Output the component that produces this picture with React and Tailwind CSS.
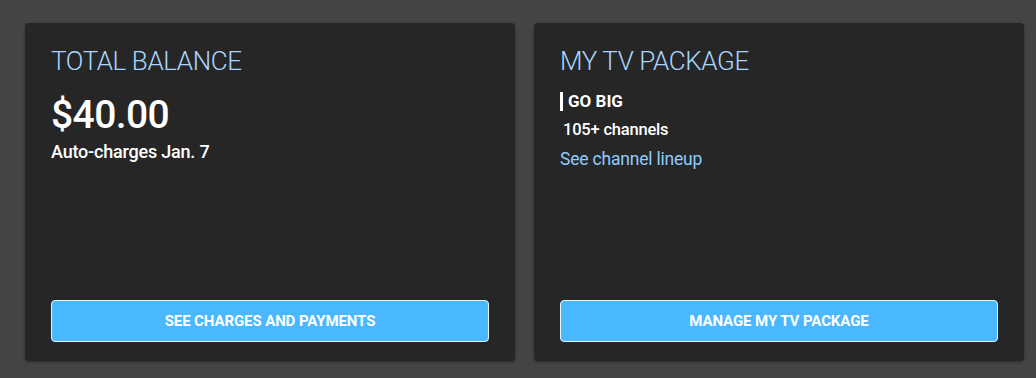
import React from "react";

const font = { fontFamily: "Roboto, 'Liberation Sans', sans-serif" };

function Card({ title, children, action }) {
  return (
    <div className="flex flex-col w-[490px] h-[338px] bg-[#262626] rounded-[4px] shadow-[0_1px_3px_rgba(0,0,0,0.35)] px-[26px] pt-[21px] pb-[19px]">
      <h2 className="text-[26px] leading-[34px] font-light text-[#a8d5ff] tracking-[-0.4px]">{title}</h2>
      <div className="flex-1">{children}</div>
      <button className="h-[42px] w-full bg-[#4ab8ff] border border-[#e6f4ff] rounded-[4px] text-white text-[15px] font-bold uppercase tracking-[-0.1px]">
        {action}
      </button>
    </div>
  );
}

export default function App() {
  return (
    <div className="min-h-screen bg-[#444444] pt-[23px] pl-[25px]" style={font}>
      <div className="flex gap-[19px]">
        <Card title="TOTAL BALANCE" action="See charges and payments">
          <div className="mt-[14px] text-[39px] leading-[46px] font-medium text-white tracking-[-0.6px]">$40.00</div>
          <div className="mt-[3px] text-[18px] leading-[22px] font-medium text-white tracking-[-0.2px]">Auto-charges Jan. 7</div>
        </Card>
        <Card title="MY TV PACKAGE" action="Manage my TV package">
          <div className="mt-[12px] flex items-center gap-[5px]">
            <span className="w-[3px] h-[19px] bg-white" />
            <span className="text-[17px] leading-[22px] font-bold text-white">GO BIG</span>
          </div>
          <div className="mt-[7px] pl-[3px] text-[16.5px] leading-[22px] font-medium text-white tracking-[-0.2px]">105+ channels</div>
          <a className="block mt-[7px] text-[17.5px] leading-[22px] text-[#8fcbff] tracking-[-0.2px]">See channel lineup</a>
        </Card>
      </div>
    </div>
  );
}
